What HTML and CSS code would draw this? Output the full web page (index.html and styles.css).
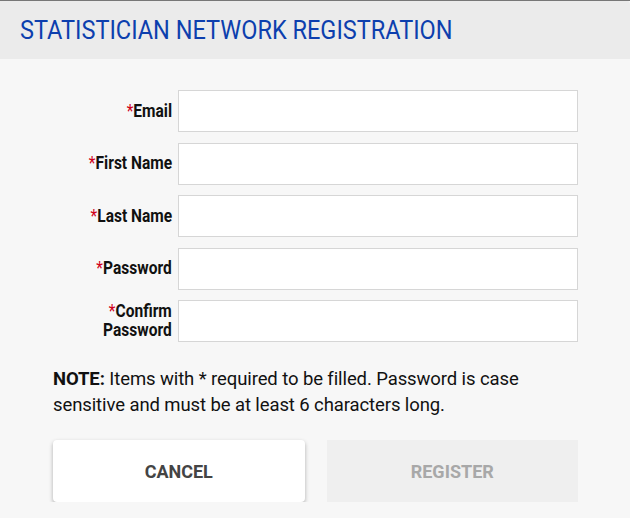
FILE: index.html
```html
<!DOCTYPE html>
<html>
<head>
<meta charset="utf-8">
<link rel="stylesheet" href="styles.css">
</head>
<body>
<div class="backdrop"></div>
<div class="dialog">
  <div class="header"><h1 class="title">STATISTICIAN NETWORK REGISTRATION</h1></div>
  <form class="form">
    <div class="row"><label class="label"><span class="txt"><span class="req">*</span>Email</span></label><input class="input" type="text"></div>
    <div class="row"><label class="label"><span class="txt"><span class="req">*</span>First Name</span></label><input class="input" type="text"></div>
    <div class="row"><label class="label"><span class="txt"><span class="req">*</span>Last Name</span></label><input class="input" type="text"></div>
    <div class="row"><label class="label"><span class="txt"><span class="req">*</span>Password</span></label><input class="input" type="password"></div>
    <div class="row"><label class="label"><span class="txt"><span class="req">*</span>Confirm<br>Password</span></label><input class="input" type="password"></div>
    <p class="note"><b>NOTE:</b> Items with * required to be filled. Password is case sensitive and must be at least 6 characters long.</p>
    <div class="actions">
      <button type="button" class="btn cancel">CANCEL</button>
      <button type="button" class="btn register" disabled>REGISTER</button>
    </div>
  </form>
</div>
</body>
</html>
```
FILE: styles.css
```css
html, body {
  margin: 0;
  padding: 0;
  background: #f7f7f7;
  font-family: Roboto, "Liberation Sans", sans-serif;
}
.backdrop {
  height: 1px;
  background: #777;
}
.dialog {
  background: #f7f7f7;
}
.header {
  background: #ebebeb;
  height: 58px;
  display: flex;
  align-items: center;
  padding-left: 20px;
  border-top-right-radius: 3px;
}
.title {
  margin: 0;
  font-size: 26px;
  font-weight: 400;
  color: #0d3fae;
  white-space: nowrap;
  transform: scaleX(0.905);
  transform-origin: left center;
}
.form {
  padding: 31px 52px 0 53px;
}
.row {
  display: flex;
  align-items: center;
  margin-bottom: 10.5px;
}
.label {
  width: 119px;
  flex: none;
  text-align: right;
  padding-right: 6px;
}
.txt {
  display: inline-block;
  font-size: 18.5px;
  font-weight: 700;
  color: #111;
  line-height: 18.5px;
  white-space: nowrap;
  transform: scaleX(0.84);
  transform-origin: right center;
}
.req { color: #d0021b; font-weight: 400; }
.input {
  width: 398px;
  height: 40px;
  box-sizing: content-box;
  padding: 0;
  border: 1px solid #d6d6d6;
  background: #fff;
  margin: 0;
  outline: none;
}
.note {
  margin: 24px 0 0;
  font-size: 18.5px;
  line-height: 26px;
  color: #111;
  width: 490px;
  letter-spacing: -0.1px;
}
.actions {
  display: flex;
  gap: 22px;
  margin-top: 22px;
}
.btn {
  width: 252px;
  height: 62px;
  border: none;
  font-family: Roboto, "Liberation Sans", sans-serif;
  font-size: 18px;
  font-weight: 700;
}
.cancel {
  background: #fff;
  color: #444;
  border-radius: 4px;
  box-shadow: 0 2px 4px rgba(0,0,0,0.3);
}
.register {
  background: #efefef;
  color: #a8a8a8;
}
```
